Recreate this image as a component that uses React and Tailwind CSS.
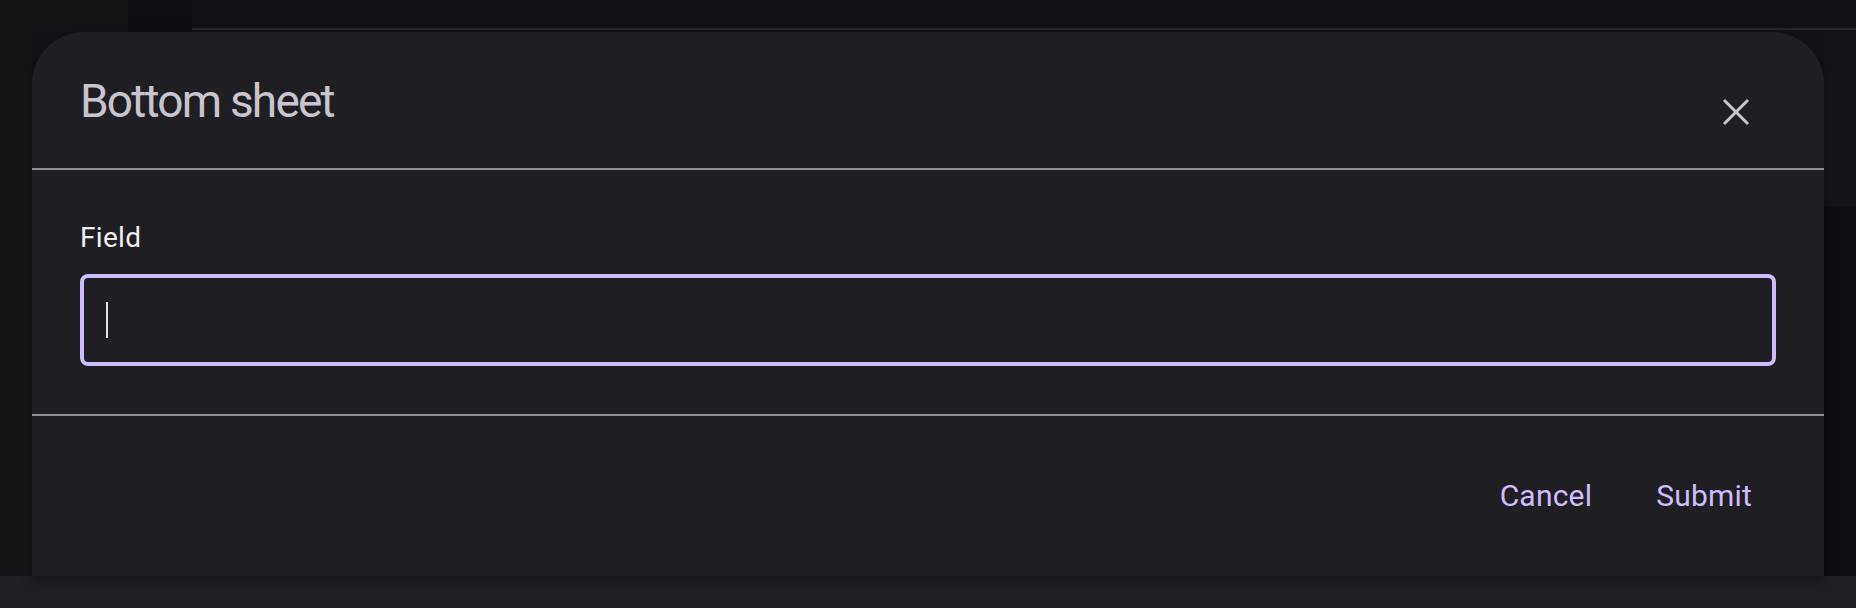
export default function App() {
  return (
    <div className="w-[1856px] h-[608px] flex flex-col overflow-hidden bg-[#131217] font-['Roboto',sans-serif]">
      {/* backdrop top strip */}
      <div className="h-[32px] flex shrink-0">
        <div className="w-[128px] bg-[#151517]" />
        <div className="w-[64px] bg-[#0f0e12]" />
        <div className="flex-1 flex flex-col">
          <div className="h-[28px] bg-[#131217]" />
          <div className="h-[2px] bg-[#28272b]" />
          <div className="flex-1 bg-[#141318]" />
        </div>
      </div>

      <div className="flex-1 flex min-h-0">
        <div className="w-[32px] bg-[#151517]" />

        {/* sheet */}
        <div className="flex-1 flex flex-col bg-[#1f1e23] rounded-t-[52px] relative z-10 shadow-[0_4px_12px_rgba(0,0,0,0.35)]">
          <div className="h-[136px] flex items-start justify-between pl-[48px] pr-[60px] pt-[46px]">
            <h1 className="text-[46px] leading-[46px] font-normal text-[#cac4d0] tracking-[-1.8px]">
              Bottom sheet
            </h1>
            <button className="w-[56px] h-[56px] mt-[6px] flex items-center justify-center">
              <svg width="28" height="28" viewBox="0 0 28 28" fill="none" stroke="#cac4d0" strokeWidth="3">
                <path d="M2 2 26 26" />
                <path d="M26 2 2 26" />
              </svg>
            </button>
          </div>

          <div className="h-[2px] bg-[#938f99]" />

          <div className="px-[48px] pt-[48px] pb-[48px]">
            <label className="block text-[28px] leading-[40px] font-normal text-[#f2eff4] tracking-[0.3px]">Field</label>
            <div className="mt-[16px] h-[92px] border-4 border-[#d0bcff] rounded-[8px] flex items-center pl-[22px]">
              <span className="w-[2px] h-[36px] bg-[#e6e1e5]" />
            </div>
          </div>

          <div className="h-[2px] bg-[#938f99]" />

          <div className="flex-1 flex items-center justify-end gap-[16px] px-[48px]">
            <button className="h-[80px] px-[24px] text-[30px] leading-[40px] font-normal text-[#d0bcff] tracking-[0.2px]">
              Cancel
            </button>
            <button className="h-[80px] px-[24px] text-[30px] leading-[40px] font-normal text-[#d0bcff] tracking-[0.2px]">
              Submit
            </button>
          </div>
        </div>

        <div className="w-[32px] flex flex-col">
          <div className="h-[174px] bg-[#151419]" />
          <div className="flex-1 bg-[#0f0e12]" />
        </div>
      </div>

      <div className="h-[32px] shrink-0 bg-[#201f23]" />
    </div>
  );
}
